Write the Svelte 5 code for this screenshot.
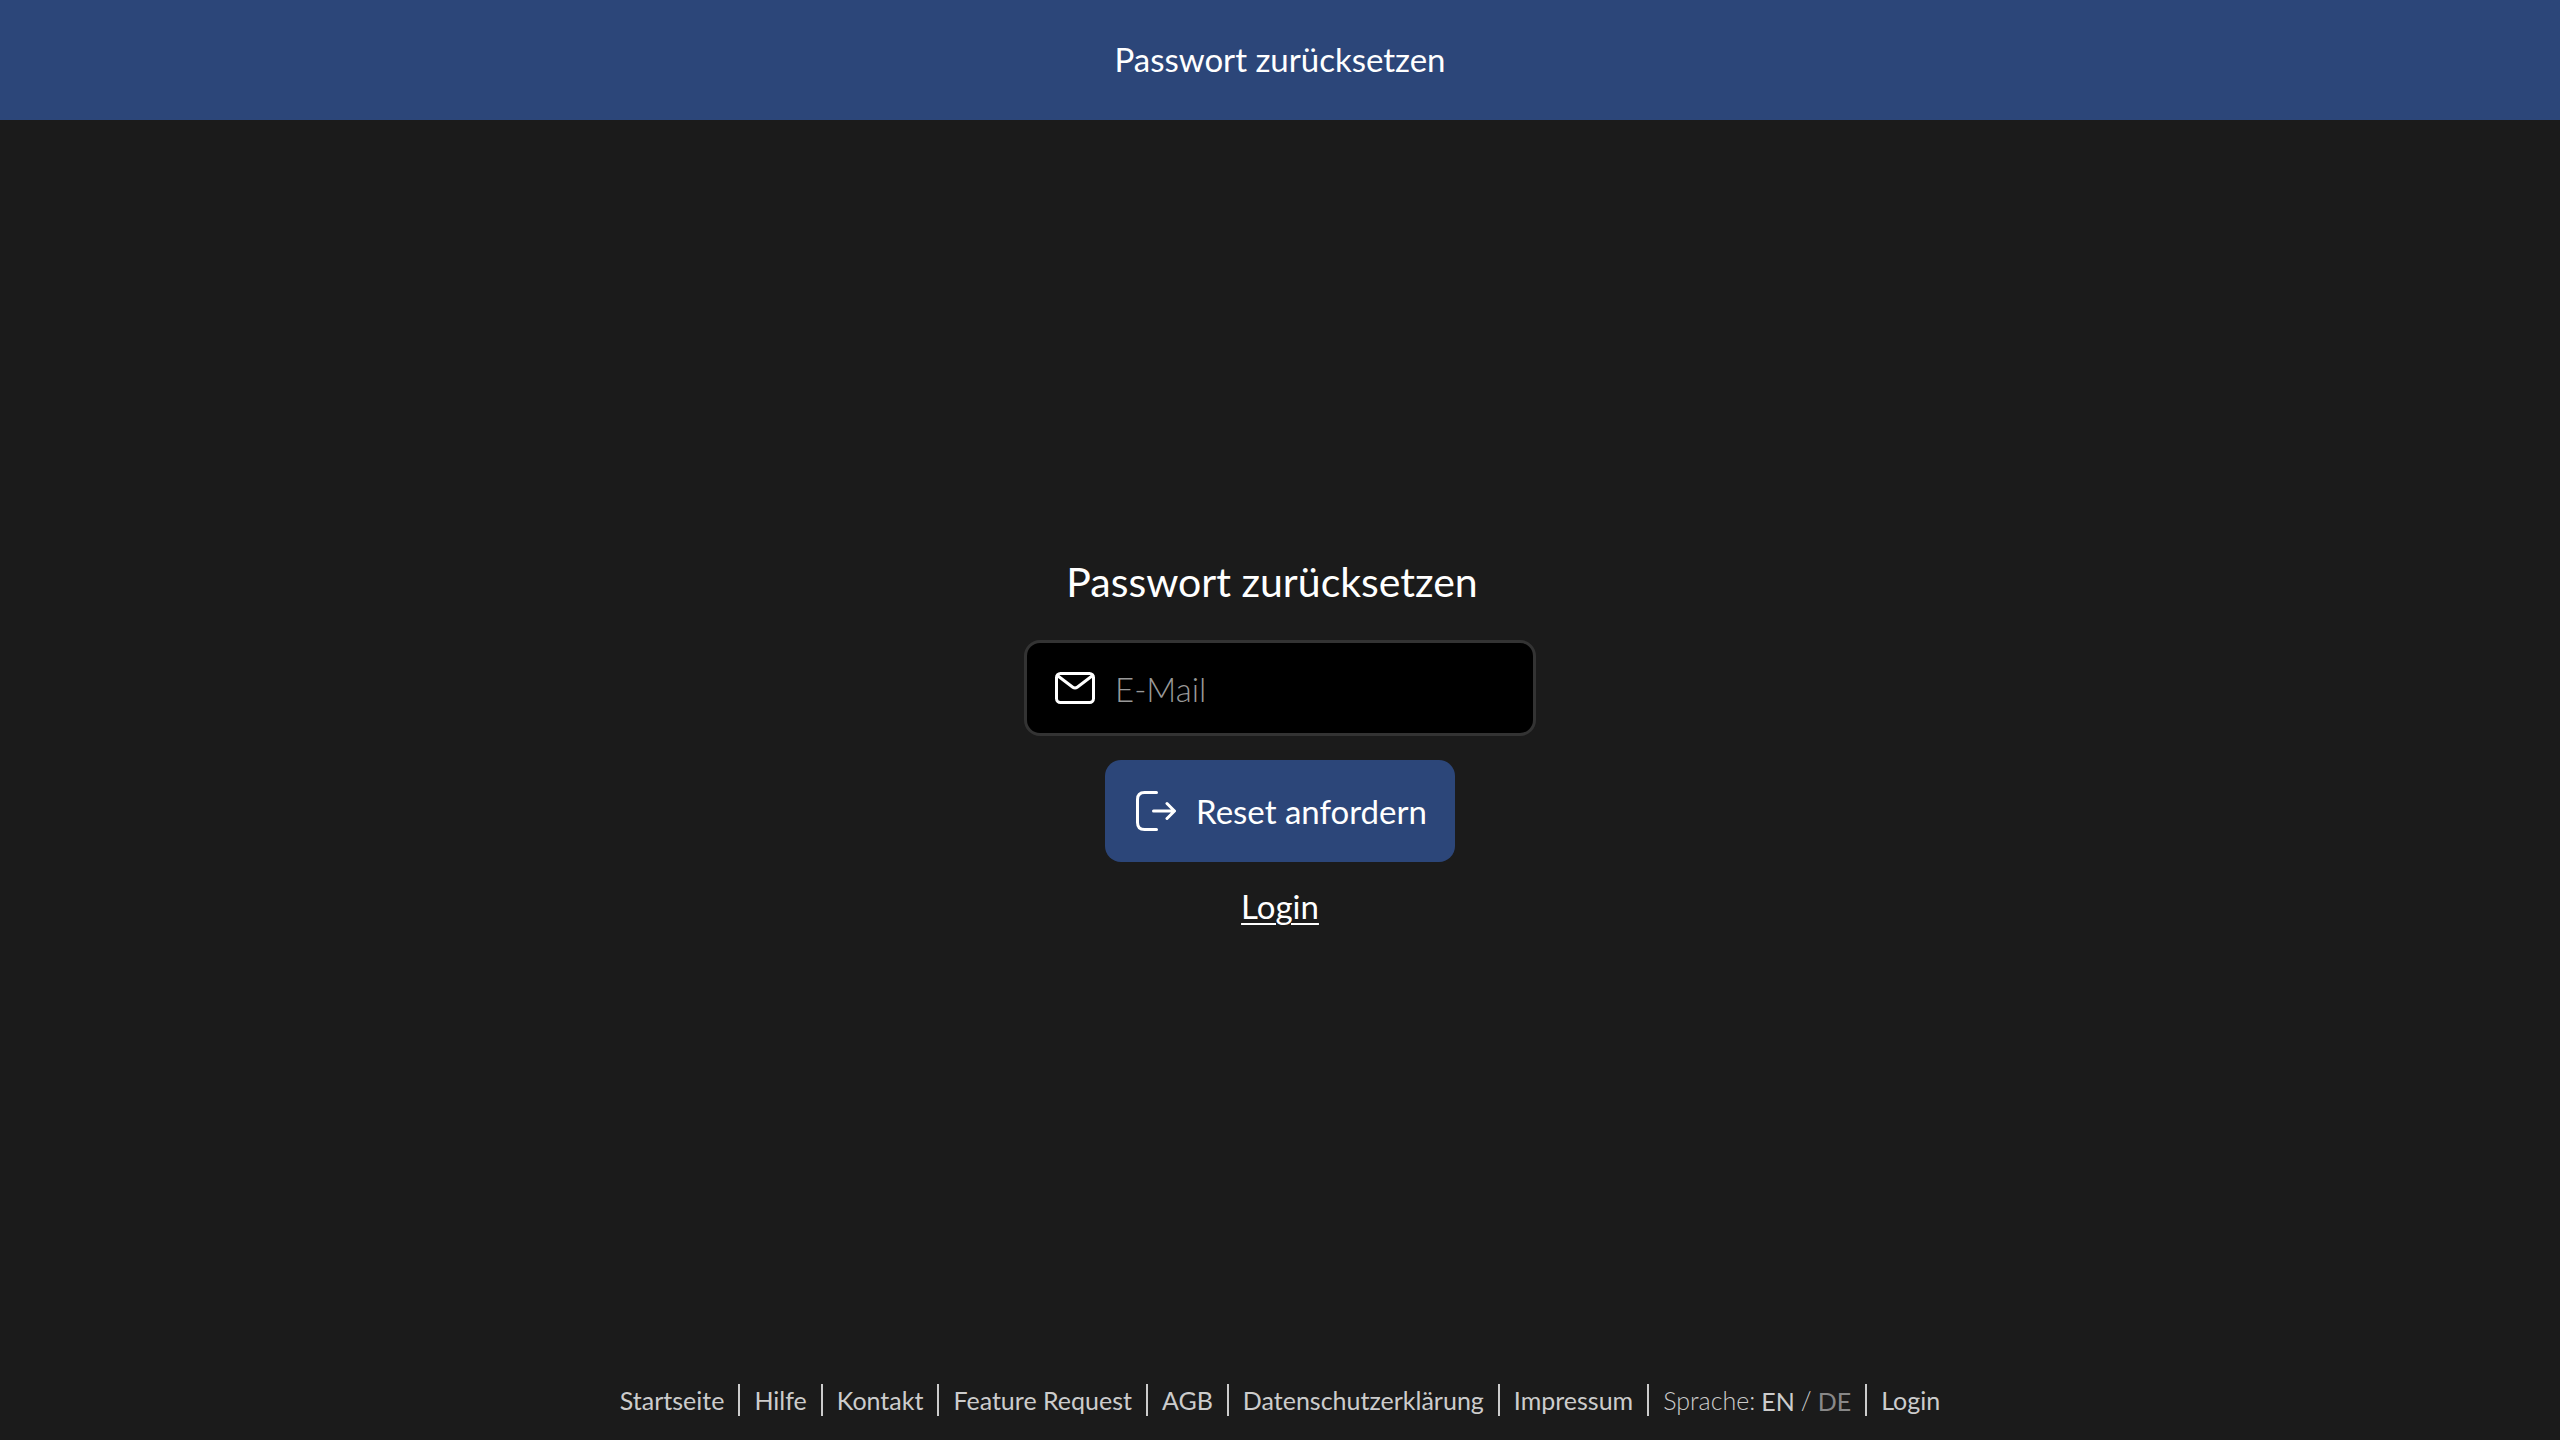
<script lang="ts">
  let email = $state('');
  let lang = $state('DE');

  const links = [
    { label: 'Startseite', href: '#start' },
    { label: 'Hilfe', href: '#hilfe' },
    { label: 'Kontakt', href: '#kontakt' },
    { label: 'Feature Request', href: '#feature-request' },
    { label: 'AGB', href: '#agb' },
    { label: 'Datenschutzerklärung', href: '#datenschutz' },
    { label: 'Impressum', href: '#impressum' },
  ];

  function submit(e: SubmitEvent) {
    e.preventDefault();
  }
</script>

<div class="page">
  <header>Passwort zurücksetzen</header>

  <main>
    <form onsubmit={submit}>
      <h1>Passwort zurücksetzen</h1>

      <label class="field">
        <svg class="mail" viewBox="0 0 40 32" aria-hidden="true">
          <rect x="1.5" y="1.5" width="37" height="29" rx="4" />
          <path d="M3 4 17.8 15.2Q20 16.8 22.2 15.2L37 4" />
        </svg>
        <input type="email" placeholder="E-Mail" aria-label="E-Mail" bind:value={email} />
      </label>

      <button class="submit" type="submit">
        <svg class="exit" viewBox="0 0 40 40" aria-hidden="true">
          <path d="M20.5 1.5H8.5Q1.5 1.5 1.5 8.5V31.5Q1.5 38.5 8.5 38.5H20.5" />
          <path d="M17.5 20H38M31 12.5 38.5 20 31 27.5" />
        </svg>
        Reset anfordern
      </button>

      <a class="login" href="#login">Login</a>
    </form>
  </main>

  <footer>
    {#each links as link}
      <a class="item" href={link.href}>{link.label}</a>
    {/each}
    <div class="item lang">
      <span>Sprache:</span>
      <div class="switch">
        <button type="button" class:current={lang === 'EN'} onclick={() => (lang = 'EN')}>EN</button>
        <span>/</span>
        <button type="button" class:current={lang === 'DE'} onclick={() => (lang = 'DE')}>DE</button>
      </div>
    </div>
    <a class="item" href="#login">Login</a>
  </footer>
</div>

<style>
  :global(body) {
    margin: 0;
    background: #1b1b1b;
  }
  .page {
    display: flex;
    flex-direction: column;
    min-height: 100vh;
    color: #fff;
    font-family: Lato, 'Open Sans', sans-serif;
    font-size: 33px;
    line-height: 48px;
  }
  header {
    padding: 35px 36px 37px;
    background: #2c4679;
    text-align: center;
  }
  main {
    flex: 1;
    display: flex;
    align-items: center;
    justify-content: center;
  }
  form {
    display: flex;
    flex-direction: column;
    align-items: center;
    width: 512px;
    max-width: 100%;
  }
  h1 {
    margin: 0 16px 30px 0;
    font-size: 41px;
    font-weight: 400;
    line-height: 56px;
  }
  svg {
    flex: none;
    fill: none;
    stroke: #fff;
    stroke-width: 3;
    stroke-linecap: round;
    stroke-linejoin: round;
  }
  .mail {
    width: 40px;
    height: 32px;
  }
  .exit {
    width: 40px;
    height: 40px;
  }
  .field {
    display: flex;
    align-items: center;
    gap: 20px;
    box-sizing: border-box;
    width: 100%;
    padding: 21px 28px;
    border: 3px solid #333;
    border-radius: 16px;
    background: #000;
  }
  input {
    flex: 1;
    min-width: 0;
    height: 48px;
    padding: 2px 0 0;
    border: 0;
    outline: 0;
    box-sizing: border-box;
    background: none;
    color: #fff;
    font: inherit;
    font-weight: 300;
  }
  input::placeholder {
    color: #999;
    opacity: 1;
  }
  button {
    border: 0;
    background: none;
    color: inherit;
    font: inherit;
    cursor: pointer;
  }
  .submit {
    display: flex;
    align-items: center;
    gap: 20px;
    margin: 24px 0 20px;
    padding: 27px 28px 27px 31px;
    border-radius: 16px;
    background: #2c4679;
  }
  .login {
    color: inherit;
    text-decoration-thickness: 2px;
    text-underline-offset: 4px;
  }
  footer {
    display: flex;
    flex-wrap: wrap;
    justify-content: center;
    padding: 20px 24px 24px;
    color: #ccc;
    font-size: 25px;
    line-height: 32px;
  }
  .item {
    padding: 0 14px;
    color: inherit;
    text-decoration: none;
  }
  .item + .item {
    border-left: 2px solid #ccc;
  }
  .lang {
    display: flex;
    gap: 6px;
    font-weight: 300;
  }
  .switch {
    display: flex;
    gap: 6px;
  }
  .switch button {
    padding: 2px 0 0;
    font-weight: 400;
    line-height: 30px;
  }
  .switch .current {
    color: #888;
  }
</style>
